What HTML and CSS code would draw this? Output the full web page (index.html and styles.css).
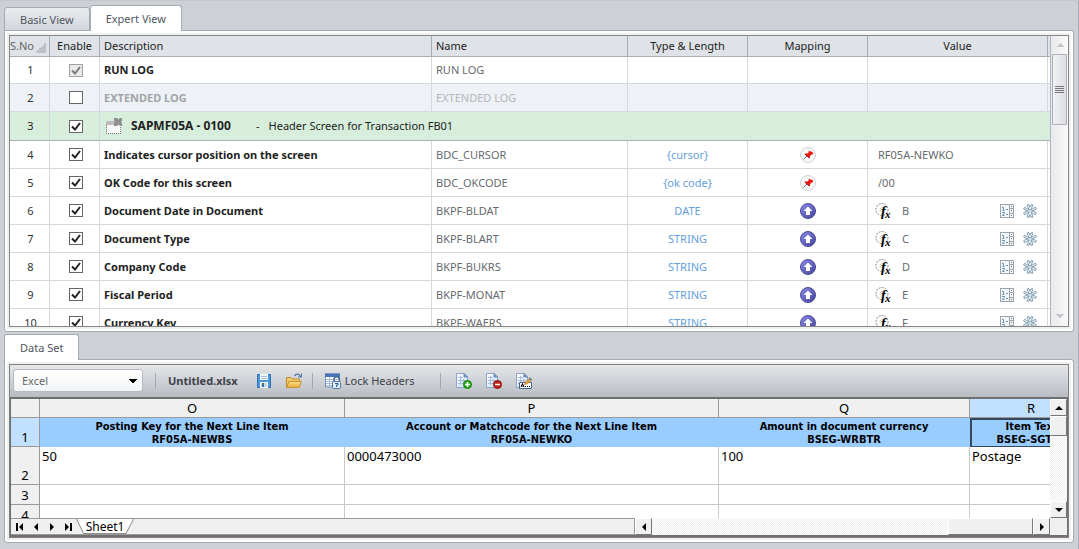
FILE: index.html
```html
<!DOCTYPE html>
<html lang="en">
  <head>
    <meta charset="UTF-8" />
    <meta name="viewport" content="width=device-width, initial-scale=1.0" />
    <title>Expert View</title>
    <link rel="stylesheet" href="styles.css">
  </head>
  <body>
    <svg class="defs" aria-hidden="true">
      <defs>
        <linearGradient id="blueBall" x1="0" y1="0" x2="1" y2="1">
          <stop offset="0" stop-color="#8b8de6" />
          <stop offset="1" stop-color="#44429a" />
        </linearGradient>
        <linearGradient id="folder" x1="0" y1="0" x2="0" y2="1">
          <stop offset="0" stop-color="#fbe08e" />
          <stop offset="1" stop-color="#e9ac35" />
        </linearGradient>
        <linearGradient id="paper" x1="0" y1="0" x2="1" y2="1">
          <stop offset="0" stop-color="#ffffff" />
          <stop offset="1" stop-color="#c9dcf3" />
        </linearGradient>
      </defs>
      <symbol id="pin" viewBox="0 0 16 16">
        <circle cx="8" cy="8" r="7.5" fill="#f6f7f8" stroke="#cfd3d7" />
        <path d="M3.5 12.5 7 9" stroke="#777" stroke-width="1" />
        <path d="M8.6 3.4 9.8 4.3 12.6 5 13.2 7.2 11.6 7.4 10 9 10 11.2 8.6 11 7.6 9.2 4.6 7.6 4.8 6.6 7.4 6.4 8.8 5.2z" fill="#f5140c" />
        <path d="M5 7 8.8 10.8" stroke="#9c2020" stroke-width="1" />
      </symbol>
      <symbol id="up" viewBox="0 0 16 16">
        <circle cx="8" cy="8" r="7.5" fill="url(#blueBall)" stroke="#4b4a9d" />
        <path d="M8 3.4 12.4 8H10v4H6V8H3.6z" fill="#fff" />
      </symbol>
      <symbol id="fx" viewBox="0 0 16 16">
        <circle cx="7" cy="6.500" r="6" fill="none" stroke="#8a8a8a" stroke-dasharray="2 1" />
        <circle cx="7" cy="6.500" r="2" fill="none" stroke="#a5a5a5" stroke-dasharray="1 1" />
        <text x="6" y="13" class="fx-f">f</text>
        <text x="10" y="15" class="fx-x">x</text>
      </symbol>
      <symbol id="list" viewBox="0 0 14 14">
        <rect x=".5" y=".5" width="13" height="13" fill="#f4f7fa" stroke="#9ba3ab" />
        <path d="M9.5 1v12M9.5 4.5H13M9.5 9.5H13" stroke="#9ba3ab" />
        <path d="M11 2.5h1M11 11.5h1M11 6.5h1" stroke="#6d757d" />
        <path d="M2 3.5h1.5V6M2.5 6.5h2M2 8.5h2.5v1L2.5 11v.5h2M6 5.5h2M6 10.5h2" fill="none" stroke="#6d93ae" />
      </symbol>
      <symbol id="star" viewBox="0 0 14 14">
        <g fill="#f2f7fa" stroke="#7795a9" stroke-width=".9">
          <path d="M6.6 6 4.8 3 4.3.8 6 .8 7 3.2 8 .8 9.8.8 9.2 3 7.6 6 10 4.5 12.6 3.2 13.4 5 11 6.2 8.6 6.8 11 7.6 13.4 8.8 12.4 10.6 10 9.4 7.8 7.8 9.3 11 9.7 13.2 7.9 13.2 7 10.6 6 13.2 4.2 13.2 4.8 10.8 6.3 7.8 4 9.4 1.5 10.6.6 8.8 3 7.6 5.4 6.9 3 6.2.6 5 1.5 3.2 4 4.6z" />
        </g>
      </symbol>
      <symbol id="sheet" viewBox="0 0 16 16">
        <path d="M.5.5H8L11.5 4V14.5H.5z" fill="url(#paper)" stroke="#8ca5c7" />
        <path d="M8 .5V4h3.5z" fill="#6c8dbd" stroke="#6c8dbd" />
        <path d="M2 4.5h5M2 7.5h8M2 10.5h7M4.5 3v9M7.5 6v6" stroke="#a9bddb" />
      </symbol>
    </svg>

    <main class="views">
      <section class="section section-top">
        <nav class="tabs">
          <a href="#basic" class="tab">Basic View</a>
          <a href="#expert" class="tab active">Expert View</a>
        </nav>
        <div class="panel">
          <div class="grid-box">
            <div class="grid-scroll">
              <table class="grid">
                <colgroup>
                  <col class="w-no"><col class="w-enable"><col><col class="w-name">
                  <col class="w-type"><col class="w-map"><col class="w-value"><col class="w-end">
                </colgroup>
                <thead>
                  <tr>
                    <th class="sort">S.No</th>
                    <th class="center">Enable</th>
                    <th>Description</th>
                    <th>Name</th>
                    <th class="center">Type &amp; Length</th>
                    <th class="center">Mapping</th>
                    <th class="center">Value</th>
                    <th></th>
                  </tr>
                </thead>
                <tbody>
                  <tr>
                    <td class="no">1</td>
                    <td class="center"><input type="checkbox" aria-label="Enable row 1" checked disabled></td>
                    <td class="desc">RUN LOG</td>
                    <td>RUN LOG</td>
                    <td></td><td></td><td></td><td></td>
                  </tr>
                  <tr class="off">
                    <td class="no">2</td>
                    <td class="center"><input type="checkbox" aria-label="Enable row 2"></td>
                    <td class="desc">EXTENDED LOG</td>
                    <td>EXTENDED LOG</td>
                    <td></td><td></td><td></td><td></td>
                  </tr>
                  <tr class="screen">
                    <td class="no">3</td>
                    <td class="center"><input type="checkbox" aria-label="Enable row 3" checked></td>
                    <td colspan="6">
                      <div class="screen-title">
                        <svg class="window-icon" viewBox="0 0 17 17">
                          <rect x="1" y="4" width="14" height="11" fill="#f8f8f8" />
                          <path d="M0 3h10v4H0z" fill="#bdbdbd" />
                          <path d="M.5 7v8.500H14.500V8" fill="none" stroke="#777" stroke-dasharray="1 1" />
                          <path d="M8 0h3l1.500 1.500L14 0h2v3l-1 1L16 5v3h-2l-1.500-1.500L11 8H8V5l1-1L8 3z" fill="#8f8f8f" />
                        </svg>
                        <strong>SAPMF05A - 0100</strong>
                        <span>-</span>
                        <span>Header Screen for Transaction FB01</span>
                      </div>
                    </td>
                  </tr>
                  <tr>
                    <td class="no">4</td>
                    <td class="center"><input type="checkbox" aria-label="Enable row 4" checked></td>
                    <td class="desc">Indicates cursor position on the screen</td>
                    <td>BDC_CURSOR</td>
                    <td class="type">{cursor}</td>
                    <td class="center"><svg class="icon"><use href="#pin" /></svg></td>
                    <td class="fixed">RF05A-NEWKO</td>
                    <td></td>
                  </tr>
                  <tr>
                    <td class="no">5</td>
                    <td class="center"><input type="checkbox" aria-label="Enable row 5" checked></td>
                    <td class="desc">OK Code for this screen</td>
                    <td>BDC_OKCODE</td>
                    <td class="type">{ok code}</td>
                    <td class="center"><svg class="icon"><use href="#pin" /></svg></td>
                    <td class="fixed">/00</td>
                    <td></td>
                  </tr>
                  <tr>
                    <td class="no">6</td>
                    <td class="center"><input type="checkbox" aria-label="Enable row 6" checked></td>
                    <td class="desc">Document Date in Document</td>
                    <td>BKPF-BLDAT</td>
                    <td class="type">DATE</td>
                    <td class="center"><svg class="icon"><use href="#up" /></svg></td>
                    <td><div class="value"><svg class="icon"><use href="#fx" /></svg><span>B</span><svg class="small"><use href="#list" /></svg><svg class="small"><use href="#star" /></svg></div></td>
                    <td></td>
                  </tr>
                  <tr>
                    <td class="no">7</td>
                    <td class="center"><input type="checkbox" aria-label="Enable row 7" checked></td>
                    <td class="desc">Document Type</td>
                    <td>BKPF-BLART</td>
                    <td class="type">STRING</td>
                    <td class="center"><svg class="icon"><use href="#up" /></svg></td>
                    <td><div class="value"><svg class="icon"><use href="#fx" /></svg><span>C</span><svg class="small"><use href="#list" /></svg><svg class="small"><use href="#star" /></svg></div></td>
                    <td></td>
                  </tr>
                  <tr>
                    <td class="no">8</td>
                    <td class="center"><input type="checkbox" aria-label="Enable row 8" checked></td>
                    <td class="desc">Company Code</td>
                    <td>BKPF-BUKRS</td>
                    <td class="type">STRING</td>
                    <td class="center"><svg class="icon"><use href="#up" /></svg></td>
                    <td><div class="value"><svg class="icon"><use href="#fx" /></svg><span>D</span><svg class="small"><use href="#list" /></svg><svg class="small"><use href="#star" /></svg></div></td>
                    <td></td>
                  </tr>
                  <tr>
                    <td class="no">9</td>
                    <td class="center"><input type="checkbox" aria-label="Enable row 9" checked></td>
                    <td class="desc">Fiscal Period</td>
                    <td>BKPF-MONAT</td>
                    <td class="type">STRING</td>
                    <td class="center"><svg class="icon"><use href="#up" /></svg></td>
                    <td><div class="value"><svg class="icon"><use href="#fx" /></svg><span>E</span><svg class="small"><use href="#list" /></svg><svg class="small"><use href="#star" /></svg></div></td>
                    <td></td>
                  </tr>
                  <tr>
                    <td class="no">10</td>
                    <td class="center"><input type="checkbox" aria-label="Enable row 10" checked></td>
                    <td class="desc">Currency Key</td>
                    <td>BKPF-WAERS</td>
                    <td class="type">STRING</td>
                    <td class="center"><svg class="icon"><use href="#up" /></svg></td>
                    <td><div class="value"><svg class="icon"><use href="#fx" /></svg><span>F</span><svg class="small"><use href="#list" /></svg><svg class="small"><use href="#star" /></svg></div></td>
                    <td></td>
                  </tr>
                </tbody>
              </table>
            </div>
            <div class="scrollbar">
              <button class="flat" aria-label="Scroll up"></button>
              <div class="thumb"></div>
              <button class="flat down" aria-label="Scroll down"></button>
            </div>
          </div>
        </div>
      </section>

      <section class="section">
        <nav class="tabs">
          <a href="#dataset" class="tab active">Data Set</a>
        </nav>
        <div class="panel">
          <div class="data-box">
            <div class="toolbar">
              <select class="source" aria-label="Source">
                <option>Excel</option>
              </select>
              <div class="group">
                <strong>Untitled.xlsx</strong>
                <button class="tool save" aria-label="Save">
                  <svg viewBox="0 0 16 16">
                    <path d="M1.500 1.500h13v13h-13z" fill="#4b97dd" stroke="#2e6fb5" />
                    <path d="M4 1h8v6H4zM4 9h8v6H4z" fill="#f2f7fc" />
                    <path d="M5 3.500h6M5 5.500h6" stroke="#a9bccf" />
                    <path d="M5 10h6v4H5z" fill="#cfd9e2" />
                    <path d="M6 10h2v4H6z" fill="#39719f" />
                  </svg>
                </button>
                <button class="tool" aria-label="Open">
                  <svg viewBox="0 0 16 16">
                    <path d="M.5 14.500V4.500H5L6.500 6H13.500V9" fill="#efc869" stroke="#c18d2c" />
                    <path d="M.5 14.500 3 8.500H15.500L13 14.500z" fill="url(#folder)" stroke="#c9922b" />
                    <path d="M8.500 3C10 .5 13 .5 14.500 3.500M15.500.5V4H12" fill="none" stroke="#5578a0" stroke-width="1.200" />
                  </svg>
                </button>
              </div>
              <div class="group lock-group">
                <button class="tool">
                  <svg viewBox="0 0 16 16">
                    <rect x=".5" y="1" width="14" height="13" fill="#fff" stroke="#7c93ba" />
                    <path d="M0 .5h15V4H0z" fill="#4b72b2" />
                    <path d="M1 6.500h13M1 8.500h13M1 10.500h13M1 12.500h13M4.500 4v10M9.500 4v10" stroke="#a8bbda" />
                    <path d="M9 9V6.500a2.700 2.700 0 0 1 5.400 0V9" fill="none" stroke="#44699f" stroke-width="1.500" />
                    <rect x="7.500" y="8.500" width="8" height="7" rx="1" fill="#e0ebf7" stroke="#4d75ad" />
                    <path d="M10 10.500h3v1.500h-1.500v2" fill="none" stroke="#345d95" />
                  </svg>
                  Lock Headers
                </button>
              </div>
              <div class="group sheet-group">
                <button class="tool" aria-label="Add sheet">
                  <svg viewBox="0 0 16 16"><use href="#sheet" /><circle cx="11.500" cy="11.500" r="4" fill="#28ae18" stroke="#15820a" /><path d="M9 11.500h5M11.500 9v5" stroke="#fff" stroke-width="1.500" /></svg>
                </button>
                <button class="tool" aria-label="Remove sheet">
                  <svg viewBox="0 0 16 16"><use href="#sheet" /><circle cx="11.500" cy="11.500" r="4" fill="#c0221b" stroke="#8f1510" /><path d="M9 11.500h5" stroke="#fff" stroke-width="1.500" /></svg>
                </button>
                <button class="tool" aria-label="Rename sheet">
                  <svg viewBox="0 0 16 16"><use href="#sheet" /><path d="M3.500 9.500h12v6h-12z" fill="#fff" stroke="#41648d" /><path d="M5 14l1.500-3.500L8 14M5.500 13h2M9 13.500h1M11 13.500h1M13 13.500h1" fill="none" stroke="#000" /><path d="M8.500 11.500 9.500 9 14 4.500 16 6.500 11.500 11z" fill="#e9a63c" stroke="#a56a1b" stroke-width=".5" /><path d="M13.300 5.200 15.300 7.200" stroke="#4d7fc0" stroke-width="1.500" /></svg>
                </button>
              </div>
            </div>

            <div class="sheet-box">
              <div class="sheet-main">
                <div class="sheet-scroll">
                  <table class="sheet">
                    <colgroup>
                      <col class="c-head"><col class="c-o"><col class="c-p"><col class="c-q"><col class="c-r">
                    </colgroup>
                    <thead>
                      <tr><th></th><th>O</th><th>P</th><th>Q</th><th class="picked">R</th></tr>
                    </thead>
                    <tbody>
                      <tr class="titles">
                        <th class="picked">1</th>
                        <td>Posting Key for the Next Line Item<br>RF05A-NEWBS</td>
                        <td>Account or Matchcode for the Next Line Item<br>RF05A-NEWKO</td>
                        <td>Amount in document currency<br>BSEG-WRBTR</td>
                        <td class="cursor">Item Text<br>BSEG-SGTXT</td>
                      </tr>
                      <tr class="tall"><th>2</th><td>50</td><td>0000473000</td><td>100</td><td>Postage</td></tr>
                      <tr><th>3</th><td></td><td></td><td></td><td></td></tr>
                      <tr><th>4</th><td></td><td></td><td></td><td></td></tr>
                    </tbody>
                  </table>
                </div>
                <div class="track vertical">
                  <button class="classic" aria-label="Scroll up"><svg viewBox="0 0 8 8"><path d="M0 6 4 2 8 6z" /></svg></button>
                  <div class="classic-thumb"></div>
                  <button class="classic" aria-label="Scroll down"><svg viewBox="0 0 8 8"><path d="M0 2 4 6 8 2z" /></svg></button>
                </div>
              </div>
              <div class="sheet-bar">
                <div class="sheet-tabs">
                  <button class="step" aria-label="First sheet"><svg viewBox="0 0 8 8"><path d="M0 0h2v8H0zM7 0v8L3 4z" /></svg></button>
                  <button class="step" aria-label="Previous sheet"><svg viewBox="0 0 8 8"><path d="M6 0v8L2 4z" /></svg></button>
                  <button class="step" aria-label="Next sheet"><svg viewBox="0 0 8 8"><path d="M2 0v8L6 4z" /></svg></button>
                  <button class="step" aria-label="Last sheet"><svg viewBox="0 0 8 8"><path d="M1 0v8L5 4zM6 0h2v8H6z" /></svg></button>
                  <a href="#sheet1" class="sheet-tab">
                    <svg viewBox="0 0 58 16" preserveAspectRatio="none"><path d="M.5 0 7.500 15.500H50L57.500 0" fill="#fff" stroke="#888" /></svg>
                    <span>Sheet1</span>
                  </a>
                </div>
                <div class="track horizontal">
                  <button class="classic" aria-label="Scroll left"><svg viewBox="0 0 8 8"><path d="M6 0v8L2 4z" /></svg></button>
                  <div class="classic-thumb"></div>
                  <button class="classic" aria-label="Scroll right"><svg viewBox="0 0 8 8"><path d="M2 0v8L6 4z" /></svg></button>
                </div>
                <div class="corner"></div>
              </div>
            </div>
          </div>
        </div>
      </section>
    </main>
  </body>
</html>
```
FILE: styles.css
```css
* {
  box-sizing: border-box;
}

body {
  margin: 0;
  font-family: "Noto Sans", sans-serif;
  font-size: 11px;
  color: #222;
  background-color: #cdd0d5;
}

button,
select {
  margin: 0;
  padding: 0;
  border: none;
  background: none;
  font: inherit;
  color: inherit;
}

a {
  color: inherit;
  text-decoration: none;
}

svg {
  display: block;
}

.defs {
  position: absolute;
  width: 0;
  height: 0;
}

.views {
  display: flex;
  flex-direction: column;
  gap: 2px;
  height: 100vh;
  padding: 4px 4px 6px;
  border-top: 1px solid #c4c7cb;
  border-right: 1px solid #a9afb8;
}

.section {
  display: flex;
  flex-direction: column;
  flex: none;
}

.section-top {
  flex: 1;
  min-height: 0;
}

/* tabs */
.tabs {
  display: flex;
  align-items: flex-end;
  margin-bottom: -1px;
}

.tab {
  height: 24px;
  padding: 0 15px;
  line-height: 23px;
  color: #4f5660;
  border: 1px solid #a3abb4;
  border-radius: 3px 3px 0 0;
  background: linear-gradient(#e8ebee, #d3d7dc);
}

.tab.active {
  height: 26px;
  line-height: 26px;
  background: #fff;
  border-bottom: none;
  z-index: 1;
}

.panel {
  display: flex;
  flex: 1;
  min-height: 0;
  padding: 4px;
  background: #f0f0f0;
  border: 1px solid #a3abb4;
  border-radius: 0 3px 3px 3px;
  box-shadow: inset 0 0 0 2px #fff;
}

/* expert grid */
.grid-box {
  display: flex;
  flex: 1;
  min-width: 0;
  background: #fff;
  border: 1px solid #858585;
}

.grid-scroll {
  flex: 1;
  min-width: 0;
  overflow: hidden;
  border-right: 1px solid #b0b5c4;
}

.grid {
  width: 100%;
  table-layout: fixed;
  border-collapse: separate;
  border-spacing: 0;
}

.w-no { width: 40px; }
.w-enable { width: 50px; }
.w-name { width: 196px; }
.w-type { width: 120px; }
.w-map { width: 120px; }
.w-value { width: 180px; }
.w-end { width: 2px; }

.grid th {
  height: 21px;
  padding: 0 4px;
  font-weight: normal;
  line-height: 18px;
  text-align: left;
  white-space: nowrap;
  background: #dfe2e7;
  border-right: 1px solid #a9aeb5;
  border-bottom: 1px solid #a9aeb5;
}

.grid th.sort {
  padding: 0;
  color: #666;
  background: linear-gradient(135deg, transparent 50%, #bdc1c6 50%) right 3px bottom 3px / 11px 11px no-repeat #dfe2e7;
}

.grid td {
  height: 28px;
  padding: 0 4px;
  line-height: 16px;
  color: #666a6e;
  white-space: nowrap;
  border-right: 1px solid #d5d8dc;
  border-bottom: 1px solid #d5d8dc;
}

.grid th:last-child,
.grid td:last-child {
  padding: 0;
  border-right: none;
}

.grid tr:first-child td {
  height: 27px;
}

.grid th.center,
.grid td.center,
.grid td.type {
  text-align: center;
}

.grid td.no {
  padding-left: 6px;
  text-align: center;
  color: #333;
}

.grid td.desc {
  font-weight: bold;
  color: #222;
}

.grid td.type {
  color: #64a0dc;
}

.grid td.fixed {
  padding-left: 10px;
}

.off td {
  background: #eef1f5;
}

.grid .off td:nth-child(n + 3) {
  color: #b4b7ba;
}

.grid .off td.desc {
  color: #a2a5a8;
}

.grid .screen td {
  height: 29px;
  color: #222;
  background: #d8eedd;
  border-bottom-color: #a9b0ba;
}

.screen-title {
  display: flex;
  align-items: center;
  padding-left: 6px;
}

.window-icon {
  width: 17px;
  height: 17px;
  margin-right: 8px;
}

.screen-title strong {
  width: 125px;
  font-size: 12px;
}

.screen-title span:last-child {
  margin-left: 9px;
}

.icon {
  width: 16px;
  height: 16px;
}

.center .icon {
  margin: 0 auto;
}

.fx-f {
  font: italic bold 14px "Liberation Serif", serif;
}

.fx-x {
  font: italic bold 11px "Liberation Serif", serif;
}

.small {
  width: 14px;
  height: 14px;
}

.value {
  display: flex;
  align-items: center;
  gap: 9px;
  padding: 0 6px 0 3px;
}

.value span {
  flex: 1;
  padding-left: 2px;
}

input[type="checkbox"] {
  display: block;
  width: 14px;
  height: 13px;
  margin: 0 auto;
  appearance: none;
  background: #fff;
  border: 1px solid #666;
}

.center input[type="checkbox"] {
  position: relative;
  left: 1px;
}

input[type="checkbox"]:checked {
  background: #fff url("data:image/svg+xml,%3Csvg xmlns='http://www.w3.org/2000/svg' viewBox='0 0 12 11'%3E%3Cpath d='M2 5.500 5 8.500 10 2' fill='none' stroke='%23222' stroke-width='2'/%3E%3C/svg%3E") center / 12px 11px;
}

input[type="checkbox"]:disabled {
  opacity: 0.6;
  background-color: #ddd;
}

/* expert scrollbar */
.scrollbar {
  display: flex;
  flex-direction: column;
  width: 17px;
  background: linear-gradient(90deg, #e9e9ec, #fafafa);
}

.flat {
  width: 17px;
  height: 18px;
  background: conic-gradient(from 135deg at 50% 0, #c5c7ca 90deg, transparent 0) center / 8px 4px no-repeat;
}

.flat.down {
  height: 20px;
  margin-top: auto;
  background-image: conic-gradient(from -45deg at 50% 100%, #c5c7ca 90deg, transparent 0);
}

.thumb {
  width: 15px;
  height: 71px;
  margin-left: 1px;
  border: 1px solid #a9aeb8;
  border-radius: 1px;
  background:
    repeating-linear-gradient(#777 0 1px, transparent 1px 2px) center / 9px 7px no-repeat,
    linear-gradient(90deg, #f0f1f4, #dddfe4);
}

/* data set */
.data-box {
  flex: 1;
  min-width: 0;
  border: 1px solid #808080;
}

.toolbar {
  display: flex;
  align-items: center;
  height: 32px;
  padding: 0 0 1px 3px;
  color: #3d4248;
  background: linear-gradient(#e4e6e9, #b9bdc3);
}

.source {
  width: 130px;
  height: 23px;
  padding-left: 8px;
  appearance: none;
  border: 1px solid #b5bac0;
  border-radius: 3px;
  color: #666;
  background:
    conic-gradient(from -45deg at 50% 100%, #000 90deg, transparent 0) right 5px center / 8px 4px no-repeat,
    linear-gradient(#fff, #f3f4f5);
}

.group {
  display: flex;
  align-items: center;
  gap: 14px;
  height: 16px;
  margin-left: 12px;
  padding-left: 12px;
  border-left: 1px solid #a4a8ad;
}

.tool {
  display: flex;
  align-items: center;
  gap: 4px;
}

.tool.save {
  margin-left: 4px;
}

.tool svg {
  width: 16px;
  height: 16px;
}

.lock-group {
  margin-left: 10px;
}

.sheet-group {
  margin-left: 26px;
  padding-left: 15px;
}

/* spreadsheet */
.sheet-box {
  font-size: 13px;
  color: #000;
  background: #f0f0f0;
  border: 2px solid #707070;
  border-left-width: 1px;
  border-right-width: 1px;
}

.sheet-main {
  display: flex;
  height: 119px;
}

.sheet-scroll {
  flex: 1;
  min-width: 0;
  overflow: hidden;
}

.sheet {
  width: 1082px;
  table-layout: fixed;
  border-collapse: separate;
  border-spacing: 0;
  background: #fff;
}

.c-head { width: 29px; }
.c-o { width: 305px; }
.c-p { width: 374px; }
.c-q { width: 251px; }
.c-r { width: 123px; }

.sheet th {
  height: 20px;
  padding: 0;
  line-height: 17px;
  font-weight: normal;
  vertical-align: bottom;
  background: #f0f0f0;
  border-right: 1px solid #999;
  border-bottom: 1px solid #999;
}

.sheet thead th {
  height: 19px;
}

.sheet th.picked {
  background: #c2e0ff;
}

.sheet td {
  padding: 0 2px;
  line-height: 18px;
  vertical-align: top;
  border-right: 1px solid #c8c8c8;
  border-bottom: 1px solid #c8c8c8;
}

.sheet .titles td {
  height: 29px;
  padding: 2px 0 0;
  font: bold 11px/13px "DejaVu Sans Condensed", "DejaVu Sans", sans-serif;
  text-align: center;
  background: #99ccff;
  border-color: #99ccff;
}

.sheet .titles td.cursor {
  padding: 0;
  border: 2px solid #36485c;
  border-bottom-width: 1px;
}

.sheet .tall td {
  height: 38px;
}

.track {
  display: flex;
  background: repeating-conic-gradient(#fff 0 25%, #efefef 0 50%) 0 0 / 2px 2px;
}

.vertical {
  flex-direction: column;
  width: 17px;
}

.classic {
  display: flex;
  flex: none;
  align-items: center;
  justify-content: center;
  width: 17px;
  height: 17px;
}

.classic,
.classic-thumb {
  background: #f0f0f0;
  border: 1px solid #fff;
  border-right-color: #777;
  border-bottom-color: #777;
}

.classic svg,
.step svg {
  width: 8px;
  height: 8px;
}

.vertical .classic-thumb {
  height: 20px;
}

.vertical .classic:last-child {
  margin-top: auto;
}

.sheet-bar {
  display: flex;
  height: 17px;
}

.sheet-tabs {
  display: flex;
  flex: 3;
  padding-left: 1px;
  border: 1px solid #999;
  border-left: none;
}

.step {
  display: flex;
  align-items: center;
  justify-content: center;
  width: 16px;
}

.sheet-tab {
  position: relative;
  width: 58px;
  font-size: 12px;
  line-height: 15px;
  text-align: center;
}

.sheet-tab svg {
  position: absolute;
  inset: 0;
  width: 58px;
  height: 15px;
}

.sheet-tab span {
  position: relative;
}

.horizontal {
  flex: 2;
}

.horizontal .classic-thumb {
  width: 85px;
  margin-left: auto;
}

.corner {
  width: 17px;
}
```
